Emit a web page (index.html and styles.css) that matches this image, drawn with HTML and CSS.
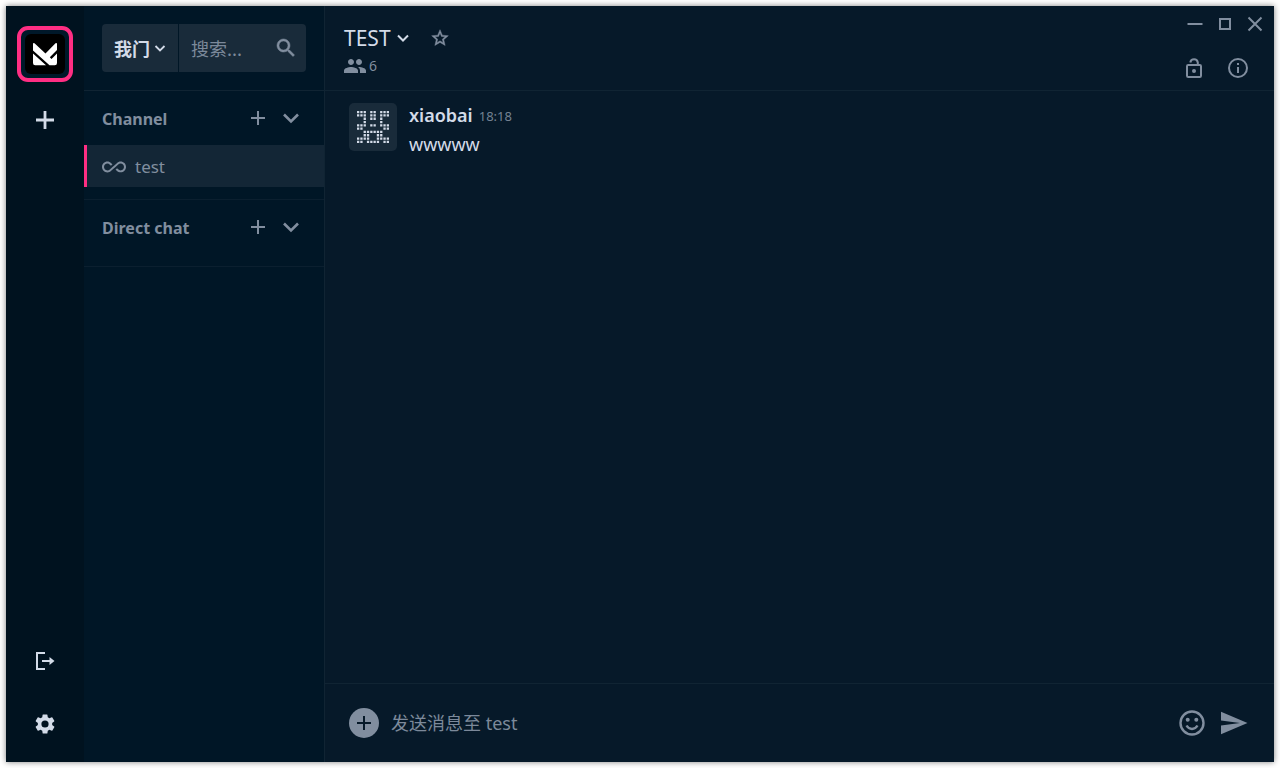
FILE: index.html
```html
<!DOCTYPE html>
<html lang="zh">
<head>
<meta charset="utf-8">
<title>Chat</title>
<link rel="stylesheet" href="styles.css">
</head>
<body>
<div class="window">
  <nav class="rail" aria-label="Communities">
    <button class="community" aria-label="Community">
      <svg class="logo" width="40" height="40" viewBox="0 0 40 40"><rect width="40" height="40" rx="6" fill="#000"/><path fill="#fff" d="M8 10Q8 8.500 9.500 9.200L20.500 19.500L30.500 9.200Q32 8.500 32 10V16L24.800 23.300L26.500 25L32 19.500V29Q32 31.200 29.800 31.200H24.500L8 16.500ZM8 19.500L21 31.200H10.200Q8 31.200 8 29Z"/></svg>
    </button>
    <button class="icon bright" aria-label="Add community"><svg width="20" height="20" viewBox="0 0 20 20"><path d="M10 1v18M1 10h18" stroke="currentColor" stroke-width="2.800"/></svg></button>
    <div class="spacer"></div>
    <button class="icon bright" aria-label="Log out"><svg width="20" height="20" viewBox="0 0 20 20" fill="none" stroke="currentColor" stroke-width="2"><path d="M10 2H2v16h8M7 10h9"/><path d="M14.500 6L19.500 10l-5 4z" fill="currentColor" stroke="none"/></svg></button>
    <button class="icon bright settings" aria-label="Settings"><svg width="24" height="24" viewBox="0 0 24 24" fill="currentColor"><path d="M19.140 12.940c.04-.3.060-.61.060-.94s-.02-.64-.07-.94l2.030-1.580a.49.49 0 0 0 .12-.61l-1.920-3.320a.49.49 0 0 0-.59-.22l-2.390.96a7 7 0 0 0-1.620-.94l-.36-2.540a.48.48 0 0 0-.48-.41h-3.840a.48.48 0 0 0-.47.41l-.36 2.540a7.300 7.300 0 0 0-1.620.94l-2.390-.96a.48.48 0 0 0-.59.22L2.740 8.870a.48.48 0 0 0 .12.61l2.030 1.580a6 6 0 0 0 0 1.880l-2.030 1.580a.49.49 0 0 0-.12.61l1.920 3.320c.12.22.37.29.59.22l2.390-.96c.5.380 1.030.7 1.620.94l.36 2.540c.05.240.24.41.48.41h3.840c.24 0 .44-.17.47-.41l.36-2.540a7.300 7.300 0 0 0 1.620-.94l2.390.96c.22.080.47 0 .59-.22l1.920-3.320a.48.48 0 0 0-.12-.61zM12 15.600a3.600 3.600 0 1 1 0-7.200 3.600 3.600 0 0 1 0 7.200"/></svg></button>
  </nav>

  <aside class="sidebar">
    <div class="filters">
      <button class="community-menu">我门<svg width="12" height="12" viewBox="0 0 12 12" fill="none" stroke="currentColor" stroke-width="1.800"><path d="M1.500 4L6 8.500 10.500 4"/></svg></button>
      <label class="search"><input type="text" placeholder="搜索..." aria-label="搜索">
        <svg width="24" height="24" viewBox="0 0 24 24" fill="currentColor" stroke="currentColor" stroke-width=".5"><path d="M15.500 14h-.79l-.28-.27A6.500 6.500 0 1 0 13.730 14.430l.27.280v.79l5 5L20.500 19zm-6 0a4.500 4.500 0 1 1 0-9 4.500 4.500 0 0 1 0 9"/></svg></label>
    </div>
    <section class="group">
      <div class="group-head"><h2>Channel</h2>
        <button class="icon" aria-label="Add channel"><svg width="16" height="16" viewBox="0 0 16 16"><path d="M8 1v14M1 8h14" stroke="currentColor" stroke-width="2"/></svg></button>
        <button class="icon" aria-label="Collapse channels"><svg width="18" height="18" viewBox="0 0 18 18"><path d="M2 5.500l7 7 7-7" fill="none" stroke="currentColor" stroke-width="2.600"/></svg></button>
      </div>
      <a class="channel" href="#test"><svg width="24" height="24" viewBox="0 -1 24 24" fill="currentColor"><path d="M18.600 6.620c-1.440 0-2.800.56-3.770 1.530L12 10.660 10.480 12h.01L7.800 14.390c-.64.64-1.490.99-2.400.99-1.870 0-3.390-1.510-3.390-3.380S3.530 8.620 5.400 8.620c.91 0 1.760.35 2.440 1.030l1.130 1 1.510-1.340L9.220 8.200C8.200 7.180 6.840 6.620 5.400 6.620 2.420 6.620 0 9.040 0 12s2.420 5.380 5.400 5.380c1.440 0 2.800-.56 3.770-1.530l2.830-2.500.01.010L13.520 12h-.01l2.690-2.390c.64-.64 1.490-.99 2.400-.99 1.870 0 3.390 1.510 3.390 3.380s-1.520 3.380-3.390 3.380c-.9 0-1.760-.35-2.440-1.030l-1.140-1.010-1.510 1.340 1.270 1.120c1.020 1.010 2.370 1.570 3.820 1.570 2.980 0 5.400-2.410 5.400-5.380s-2.420-5.370-5.400-5.370z"/></svg>test</a>
    </section>
    <section class="group">
      <div class="group-head"><h2>Direct chat</h2>
        <button class="icon" aria-label="Add direct chat"><svg width="16" height="16" viewBox="0 0 16 16"><path d="M8 1v14M1 8h14" stroke="currentColor" stroke-width="2"/></svg></button>
        <button class="icon" aria-label="Collapse direct chats"><svg width="18" height="18" viewBox="0 0 18 18"><path d="M2 5.500l7 7 7-7" fill="none" stroke="currentColor" stroke-width="2.600"/></svg></button>
      </div>
    </section>
  </aside>

  <main class="chat">
    <header class="chat-head">
      <div class="room">
        <div class="room-title">
          <button class="room-menu">TEST<svg width="14" height="14" viewBox="0 0 14 14" fill="none" stroke="currentColor" stroke-width="2"><path d="M2 4.500l5 5 5-5"/></svg></button>
          <button class="icon" aria-label="Favourite"><svg width="20" height="20" viewBox="0 0 24 24" fill="currentColor" stroke="currentColor" stroke-width=".5"><path d="M22 9.240l-7.190-.62L12 2 9.190 8.630 2 9.240l5.460 4.730L5.820 21 12 17.270 18.180 21l-1.630-7.030zM12 15.400l-3.760 2.270 1-4.280-3.320-2.880 4.380-.38L12 6.100l1.710 4.040 4.380.38-3.320 2.880 1 4.280z"/></svg></button>
        </div>
        <button class="members"><svg width="22" height="16" viewBox="1 4 22 16" fill="currentColor"><path d="M16 11c1.660 0 2.990-1.340 2.990-3S17.660 5 16 5s-3 1.340-3 3 1.340 3 3 3m-8 0c1.660 0 2.990-1.340 2.990-3S9.660 5 8 5 5 6.340 5 8s1.340 3 3 3m0 2c-2.330 0-7 1.170-7 3.500V19h14v-2.500C15 14.170 10.330 13 8 13m8 0c-.29 0-.62.020-.97.050 1.160.84 1.970 1.970 1.970 3.450V19h6v-2.500c0-2.330-4.670-3.500-7-3.500"/></svg>6</button>
      </div>
      <div class="head-actions">
        <div class="window-buttons">
          <button class="icon" aria-label="Minimise"><svg width="16" height="16" viewBox="0 0 16 16"><path d="M.5 8h15" stroke="currentColor" stroke-width="2"/></svg></button>
          <button class="icon" aria-label="Maximise"><svg width="16" height="16" viewBox="0 0 16 16"><path d="M3 3h10v10H3z" fill="none" stroke="currentColor" stroke-width="2"/></svg></button>
          <button class="icon" aria-label="Close"><svg width="16" height="16" viewBox="0 0 16 16"><path d="M1.500 1.500l13 13M14.500 1.500l-13 13" stroke="currentColor" stroke-width="2"/></svg></button>
        </div>
        <div class="room-buttons">
          <button class="icon" aria-label="Encryption"><svg width="22" height="22" viewBox="0 0 22 22" fill="none" stroke="currentColor" stroke-width="2"><rect x="4" y="8" width="14" height="12" rx="1.200"/><path d="M7.300 5.500A3.800 3.800 0 0 1 14.800 5.500V8"/><circle cx="11" cy="14" r="2" fill="currentColor" stroke="none"/></svg></button>
          <button class="icon" aria-label="Room info"><svg width="22" height="22" viewBox="0 0 22 22" fill="none" stroke="currentColor" stroke-width="2"><circle cx="11" cy="11" r="9"/><path d="M11 10v6M11 6v2"/></svg></button>
        </div>
      </div>
    </header>

    <div class="messages">
      <article class="message">
        <svg class="avatar" width="48" height="48" viewBox="0 0 48 48"><g fill="none" stroke="#d3dbe8" stroke-width="2.300" stroke-dasharray="2.300 1"><path d="M8 9.150h9.900M21.200 9.150h6.600M31.100 9.150h9.900M8 12.450h9.900M21.200 12.450h6.600M31.100 12.450h9.900"/><path d="M14.600 15.750h3.300M21.200 15.750h6.600M31.100 15.750h3.300M14.600 19.050h3.300M31.100 19.050h3.300"/><path d="M8 22.350h9.900M21.200 22.350h6.600M31.100 22.350h9.900M8 25.650h6.600M34.400 25.650h6.600"/><path d="M14.600 28.950h19.800M14.600 32.250h6.600M27.800 32.250h6.600"/><path d="M8 35.550h13.200M27.800 35.550h13.200M8 38.850h6.600M17.900 38.850h13.200M34.400 38.850h6.600"/></g></svg>
        <div class="body">
          <div class="byline"><h3>xiaobai</h3><time>18:18</time></div>
          <p>wwwww</p>
        </div>
      </article>
    </div>

    <footer class="composer">
      <button class="attach" aria-label="Attach"><svg width="16" height="16" viewBox="0 0 16 16"><path d="M8 1v14M1 8h14" stroke="currentColor" stroke-width="2"/></svg></button>
      <input type="text" placeholder="发送消息至 test" aria-label="Message">
      <button class="icon" aria-label="Emoji"><svg width="26" height="26" viewBox="0 0 26 26" fill="none" stroke="currentColor" stroke-width="2.400"><circle cx="13" cy="13" r="11.500"/><path d="M7.500 15.500Q9.500 19 13 19t5.500-3.500"/><g fill="currentColor" stroke="none"><circle cx="8.700" cy="9.800" r="2"/><circle cx="17.300" cy="9.800" r="2"/></g></svg></button>
      <button class="icon send" aria-label="Send"><svg width="28" height="24" viewBox="0 0 28 24" fill="currentColor"><path d="M1 .8L27.500 12 1 23.200v-8.700L20 12 1 9.500z"/></svg></button>
    </footer>
  </main>
</div>
</body>
</html>
```
FILE: styles.css
```css
* { box-sizing: border-box; }
body {
  margin: 0;
  height: 100vh;
  padding: 6px;
  background: #fff;
  font-family: "Noto Sans", "Noto Sans CJK SC", sans-serif;
  color: #818e9f;
}
button, input { font: inherit; color: inherit; background: none; border: 0; padding: 0; margin: 0; outline: 0; }
button { cursor: pointer; }
svg { display: block; flex: none; }
h2, h3, p { margin: 0; }
.window {
  height: 100%;
  display: flex;
  background: #061929;
  box-shadow: 0 0 6px rgba(0, 0, 0, .5);
}
.icon { display: flex; align-items: center; justify-content: center; }
.bright { color: #d3dbe8; }
.rail {
  width: 78px;
  flex: none;
  display: flex;
  flex-direction: column;
  align-items: center;
  padding: 20px 0 26px;
  background: #00121f;
}
.community {
  display: flex;
  padding: 4px;
  border: 4px solid #ff2e83;
  border-radius: 11px;
  margin-bottom: 28px;
  background: #001829;
}
.spacer { flex: 1; }
.settings { margin-top: 41px; }
.sidebar {
  width: 241px;
  flex: none;
  background: #001626;
  border-right: 1px solid #102433;
}
.filters {
  height: 85px;
  display: flex;
  gap: 1px;
  padding: 18px;
  border-bottom: 1px solid #102433;
}
.community-menu, .search { height: 48px; display: flex; align-items: center; background: #192b3a; }
.community-menu {
  gap: 4px;
  padding: 0 12px;
  border-radius: 4px 0 0 4px;
  color: #d3dbe8;
  font-size: 18px;
  font-weight: 700;
}
.search { flex: 1; min-width: 0; padding: 0 8px 0 12px; border-radius: 0 4px 4px 0; }
.search input { flex: 1; min-width: 0; font-family: "Noto Sans CJK SC", sans-serif; font-size: 18px; }
input::placeholder { color: #7c899a; opacity: 1; }
.group { padding-bottom: 12px; border-bottom: 1px solid #0b1f2f; }
.group-head { height: 54px; display: flex; align-items: center; padding: 0 24px 0 18px; }
.group-head h2 { flex: 1; padding-top: 2px; font-size: 16px; font-weight: 700; line-height: 24px; }
.group-head .icon + .icon { margin-left: 16px; }
.channel {
  height: 42px;
  display: flex;
  align-items: center;
  gap: 9px;
  padding-left: 15px;
  border-left: 3px solid #ff2e83;
  background: #132636;
  color: inherit;
  font-size: 17px;
  text-decoration: none;
}
.chat { flex: 1; min-width: 0; display: flex; flex-direction: column; }
.chat-head {
  height: 85px;
  display: flex;
  justify-content: space-between;
  padding: 10px 11px 0 19px;
  border-bottom: 1px solid #102433;
}
.room-title, .room-menu, .members, .byline, .window-buttons, .room-buttons { display: flex; align-items: center; }
.room-title { height: 44px; gap: 20px; }
.room-menu { gap: 5px; color: #d3dbe8; font-size: 21px; }
.members { height: 12px; gap: 3px; font-size: 14px; line-height: 12px; }
.window-buttons { gap: 14px; height: 16px; justify-content: flex-end; }
.room-buttons { gap: 22px; margin: 25px 14px 0 0; justify-content: flex-end; }
.messages { flex: 1; padding: 12px 24px; }
.message { display: flex; gap: 12px; color: #d3dbe8; }
.avatar { border-radius: 5px; background: #192b3a; }
.byline { gap: 6px; }
h3 { font-size: 18px; line-height: 24px; font-weight: 600; }
time { padding-top: 3px; font-size: 13px; line-height: 21px; color: #748292; }
.message p { font-size: 18px; line-height: 34px; }
.composer {
  height: 79px;
  display: flex;
  align-items: center;
  padding: 0 26px 0 24px;
  border-top: 1px solid #102433;
}
.attach {
  width: 30px;
  height: 30px;
  display: flex;
  align-items: center;
  justify-content: center;
  border-radius: 50%;
  background: #818e9f;
  color: #061929;
}
.composer input { flex: 1; min-width: 0; padding: 0 12px; font-size: 18px; }
.send { margin-left: 15px; }
```
